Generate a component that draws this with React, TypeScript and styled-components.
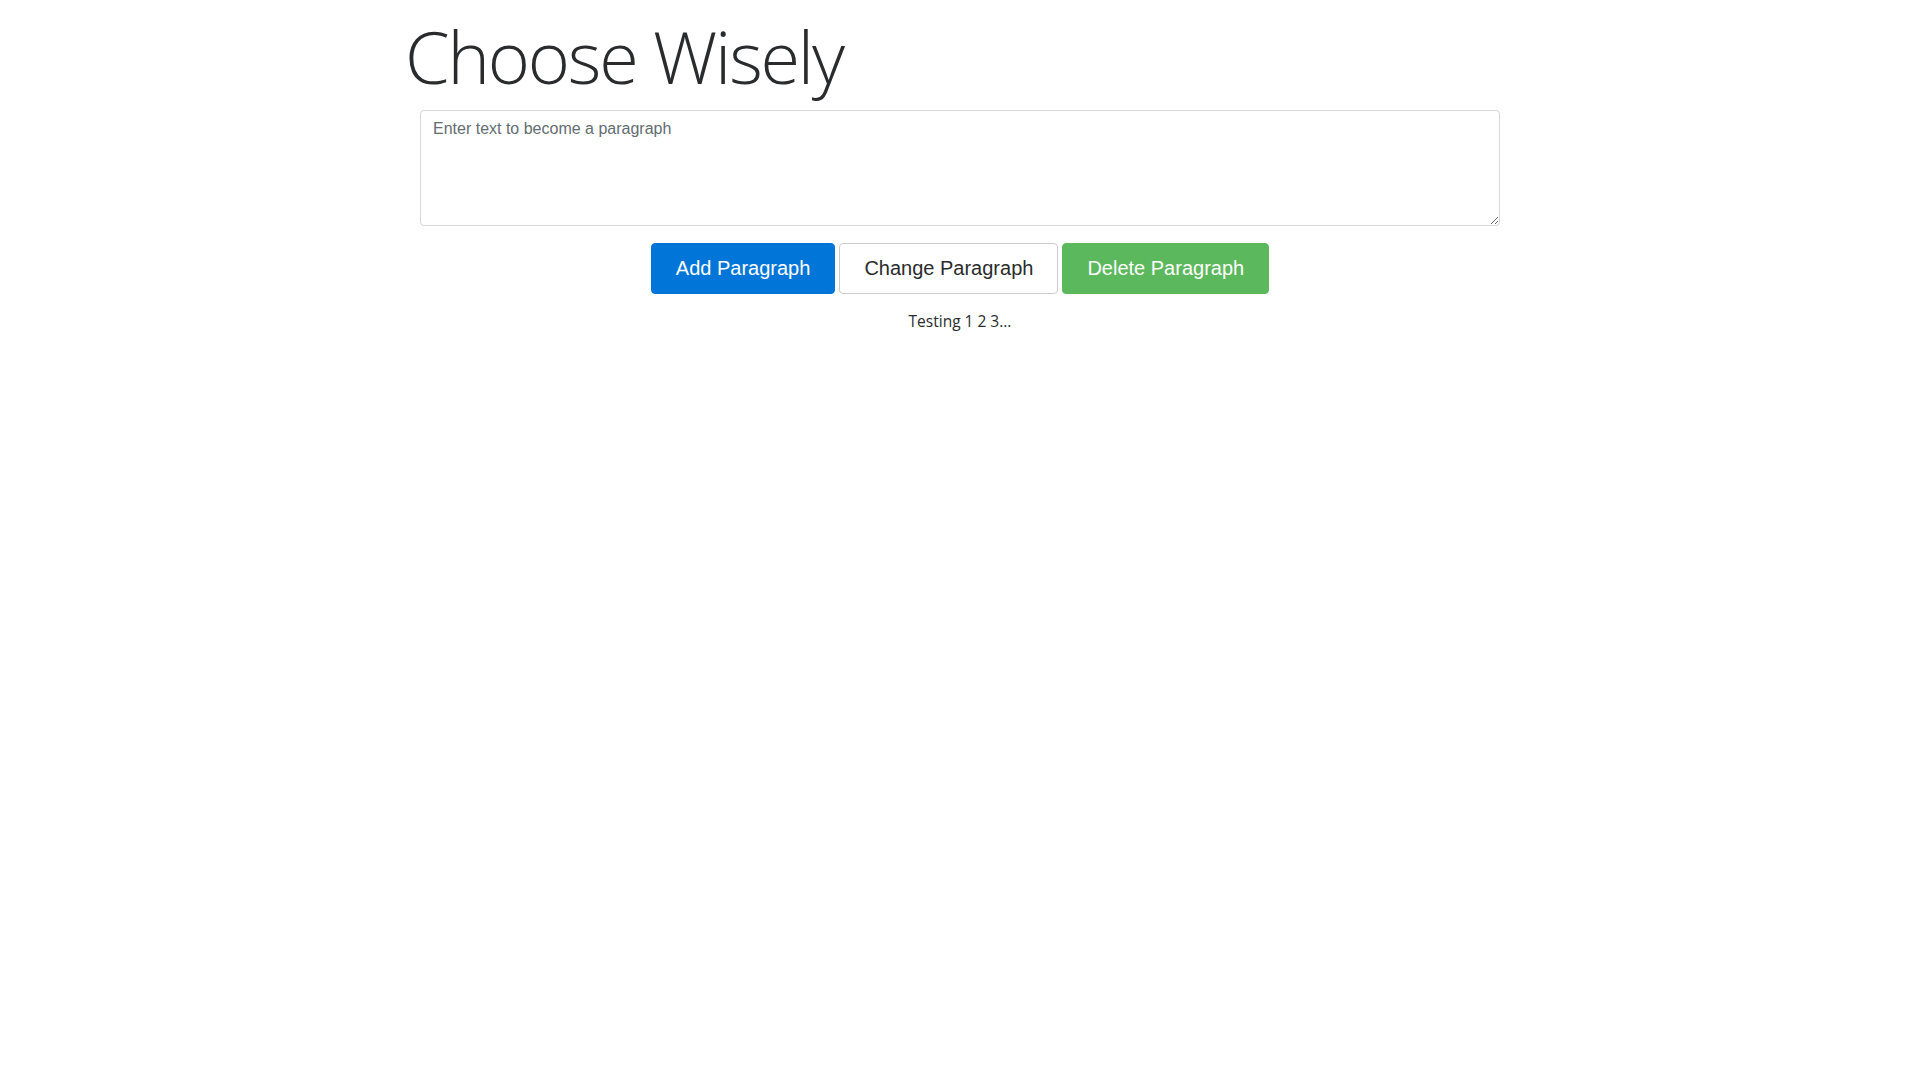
import styled, { createGlobalStyle } from "styled-components";
import { useState } from "react";

const GlobalStyle = createGlobalStyle`
    * { box-sizing: border-box; }
    body {
        margin: 0;
        background: #fff;
        color: #292b2c;
        font-family: "Open Sans", "Noto Sans", sans-serif;
        font-size: 16px;
        line-height: 1.5;
    }
`;

const App = () => {
    const [text, setText] = useState("");
    const [paragraphs, setParagraphs] = useState<string[]>(["Testing 1 2 3..."]);

    const addParagraph = () => {
        if (!text.trim()) return;
        setParagraphs([...paragraphs, text]);
        setText("");
    };

    const changeParagraph = () => {
        if (!text.trim() || paragraphs.length === 0) return;
        setParagraphs([...paragraphs.slice(0, -1), text]);
        setText("");
    };

    const deleteParagraph = () => setParagraphs(paragraphs.slice(0, -1));

    return (
        <>
            <GlobalStyle />
            <Container>
                <Title>Choose Wisely</Title>
                <InputRow>
                    <TextBox
                        placeholder="Enter text to become a paragraph"
                        value={text}
                        onChange={(e) => setText(e.target.value)}
                    />
                </InputRow>
                <ButtonRow>
                    <Btn $variant="primary" onClick={addParagraph}>Add Paragraph</Btn>
                    <Btn $variant="default" onClick={changeParagraph}>Change Paragraph</Btn>
                    <Btn $variant="success" onClick={deleteParagraph}>Delete Paragraph</Btn>
                </ButtonRow>
                <Output>
                    {paragraphs.map((p, i) => <p key={i}>{p}</p>)}
                </Output>
            </Container>
        </>
    );
};

export default App;

// ================= STYLES =================

const Container = styled.div`
    max-width: 1110px;
    margin: 0 auto;
    padding-top: 13px;
`;

const Title = styled.h1`
    margin: 0 0 11px;
    font-size: 72px;
    font-weight: 300;
    line-height: 1.2;
    letter-spacing: -2.2px;
    color: #292b2c;
`;

const InputRow = styled.div`
    padding: 0 15px;
`;

const TextBox = styled.textarea`
    display: block;
    width: 100%;
    height: 116px;
    padding: 6px 12px;
    font-family: "Liberation Sans", Arial, sans-serif;
    font-size: 16px;
    line-height: 1.5;
    color: #464a4c;
    border: 1px solid #d6d6d6;
    border-radius: 4px;
    resize: vertical;
    &::placeholder { color: #636c72; }
    &:focus { outline: none; border-color: #5cb3fd; }
`;

const ButtonRow = styled.div`
    display: flex;
    justify-content: center;
    gap: 4px;
    margin-top: 17px;
`;

const variants = {
    primary: { bg: "#0275d8", border: "#0275d8", color: "#fff" },
    default: { bg: "#fff", border: "#cccccc", color: "#292b2c" },
    success: { bg: "#5cb85c", border: "#5cb85c", color: "#fff" },
};

const Btn = styled.button<{ $variant: keyof typeof variants }>`
    padding: 10px 24px;
    font-family: "Liberation Sans", Arial, sans-serif;
    font-size: 20px;
    line-height: 29px;
    border-radius: 4px;
    cursor: pointer;
    background-color: ${({ $variant }) => variants[$variant].bg};
    border: 1px solid ${({ $variant }) => variants[$variant].border};
    color: ${({ $variant }) => variants[$variant].color};
`;

const Output = styled.div`
    margin-top: 16px;
    text-align: center;
    p { margin: 0 0 16px; font-size: 15.5px; }
`;
